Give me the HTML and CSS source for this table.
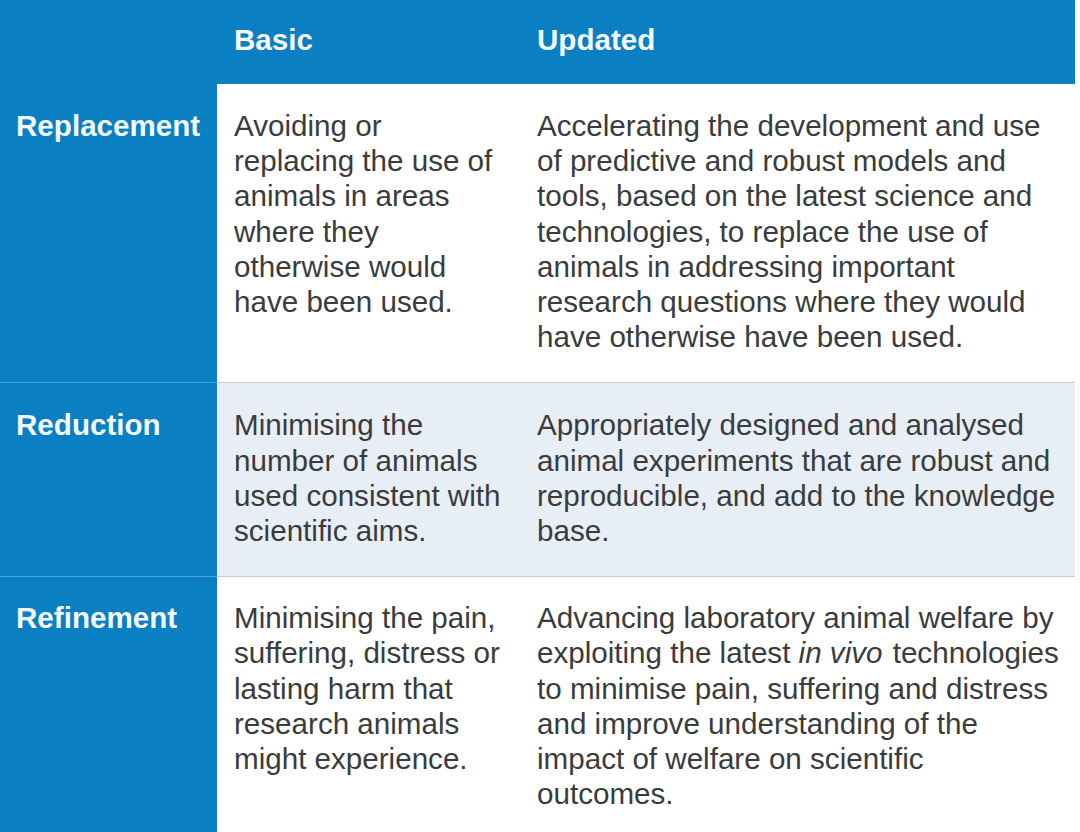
FILE: index.html
```html
<!DOCTYPE html>
<html lang="en">
<head>
<meta charset="utf-8">
<title>The 3Rs</title>
<link rel="stylesheet" href="styles.css">
</head>
<body>
<div class="table">
  <div class="row head">
    <div class="cell side"></div>
    <div class="cell th">Basic</div>
    <div class="cell th">Updated</div>
  </div>
  <div class="row r1">
    <div class="cell side label">Replacement</div>
    <div class="cell basic">Avoiding or replacing the use of animals in areas where they otherwise would have been used.</div>
    <div class="cell upd">Accelerating the development and use of predictive and robust models and tools, based on the latest science and technologies, to replace the use of animals in addressing important research questions where they would have otherwise have been used.</div>
  </div>
  <div class="row r2 shaded">
    <div class="cell side label">Reduction</div>
    <div class="cell basic">Minimising the number of animals used consistent with scientific aims.</div>
    <div class="cell upd">Appropriately designed and analysed animal experiments that are robust and reproducible, and add to the knowledge base.</div>
  </div>
  <div class="row r3">
    <div class="cell side label">Refinement</div>
    <div class="cell basic">Minimising the pain, suffering, distress or lasting harm that research animals might experience.</div>
    <div class="cell upd">Advancing laboratory animal welfare by exploiting the latest <em>in vivo</em> technologies to minimise pain, suffering and distress and improve understanding of the impact of welfare on scientific outcomes.</div>
  </div>
</div>
</body>
</html>
```
FILE: styles.css
```css
html, body {
  margin: 0;
  padding: 0;
  background: #ffffff;
}
body {
  width: 1080px;
  height: 832px;
  overflow: hidden;
  font-family: "Liberation Sans", Arial, sans-serif;
  font-size: 29.6px;
  line-height: 35.2px;
  color: #3a3b3d;
}
.table {
  width: 1075px;
}
.row {
  display: grid;
  grid-template-columns: 217px 303px 555px;
}
.cell {
  padding-left: 17px;
}
.side {
  background: #0a7fc1;
  color: #f4f9fd;
  font-weight: bold;
  padding-left: 16px;
  padding-right: 6px;
}
.head {
  height: 84px;
  background: #0a7fc1;
}
.head .cell {
  padding-top: 22px;
}
.th {
  color: #f4f9fd;
  font-weight: bold;
}
.basic {
  padding-right: 13px;
}
.upd {
  padding-right: 10px;
}
.r1 .cell {
  padding-top: 24px;
  padding-bottom: 28px;
}
.r2 .cell,
.r3 .cell {
  border-top: 1px solid #c7cbd0;
}
.r2 .side,
.r3 .side {
  border-top-color: #4fa3d6;
}
.r2 .cell {
  padding-top: 24px;
  padding-bottom: 28px;
}
.shaded .basic,
.shaded .upd {
  background: #e8eef6;
}
.r3 {
  height: 260px;
}
.r3 .cell {
  padding-top: 23px;
}
em {
  font-style: italic;
  padding-right: 2px;
}
```
